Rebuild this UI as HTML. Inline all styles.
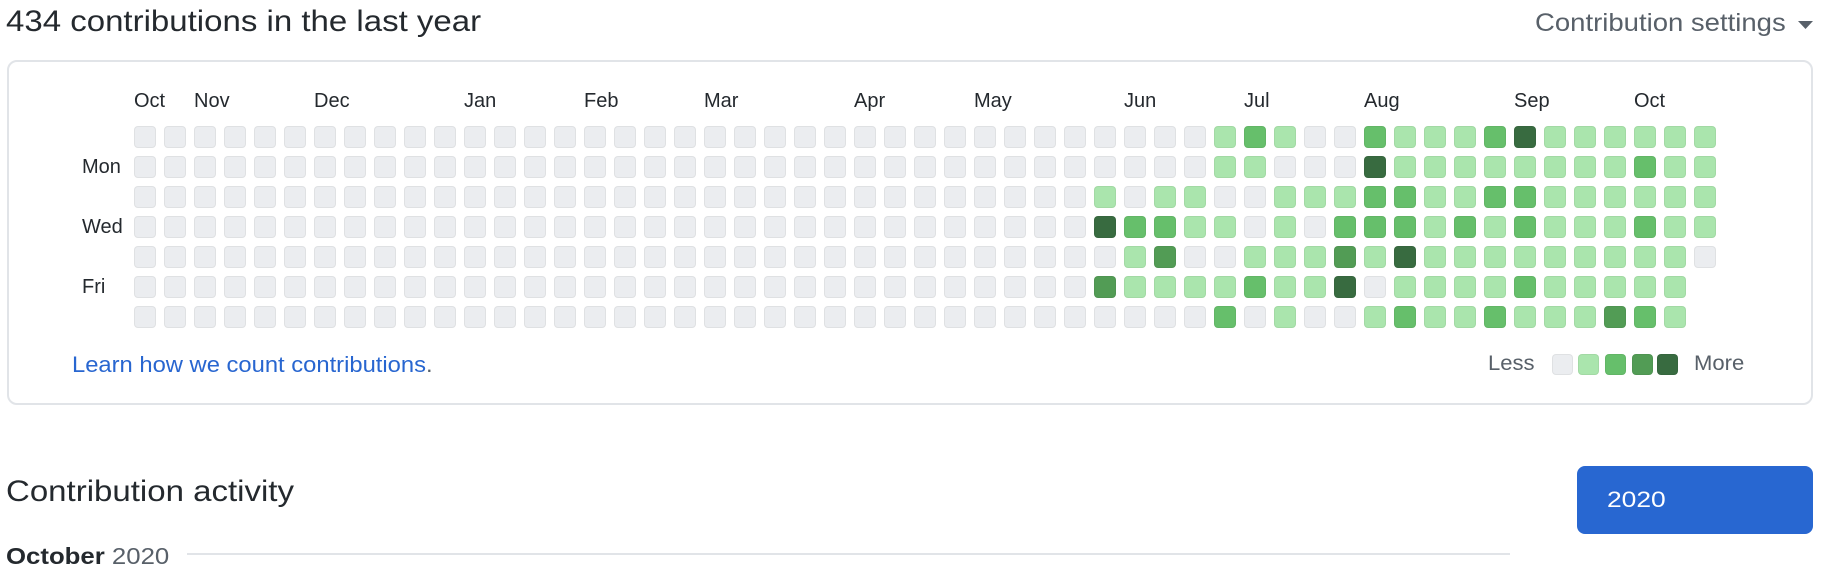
<!DOCTYPE html>
<html><head><meta charset="utf-8"><style>
body{margin:0;width:1832px;height:566px;overflow:hidden;background:#fff;font-family:"Liberation Sans",sans-serif;color:#24292e;position:relative}
.a{position:absolute;white-space:nowrap;transform-origin:0 50%}
.c{position:absolute;width:22px;height:22px;border-radius:4px;box-sizing:border-box;border:1px solid rgba(27,31,35,0.06)}
.m{font-size:20px;color:#24292e}
</style></head><body>
<div class="a" style="left:6px;top:5px;font-size:30px;transform:scaleX(1.1)">434 contributions in the last year</div>
<div class="a" style="left:1535px;top:9px;font-size:25px;color:#586069;transform:scaleX(1.1)">Contribution settings</div>
<svg class="a" style="left:1798px;top:20px" width="16" height="10"><path d="M0 1h15l-7.5 8z" fill="#586069"/></svg>
<div class="a" style="left:7px;top:60px;width:1806px;height:345px;box-sizing:border-box;border:2px solid #e1e4e8;border-radius:10px"></div>
<div id="g"></div>
<div class="a m" style="left:82px;top:156px">Mon</div>
<div class="a m" style="left:82px;top:216px">Wed</div>
<div class="a m" style="left:82px;top:276px">Fri</div>
<div class="a" style="left:72px;top:352px;font-size:22px;color:#2866d0;transform:scaleX(1.08)">Learn how we count contributions<span style="color:#586069">.</span></div>
<div class="a" style="left:1488px;top:352px;font-size:21px;color:#586069;transform:scaleX(1.05)">Less</div>
<div class="a" style="left:1694px;top:352px;font-size:21px;color:#586069;transform:scaleX(1.05)">More</div>
<div class="a" style="left:6px;top:475px;font-size:30px;transform:scaleX(1.1)">Contribution activity</div>
<div class="a" style="left:1577px;top:466px;width:236px;height:68px;background:#2867d1;border-radius:8px"></div>
<div class="a" style="left:1607px;top:487px;font-size:22px;color:#fff;transform:scaleX(1.2)">2020</div>
<div class="a" style="left:6px;top:543px;font-size:23px;font-weight:bold;transform:scaleX(1.12)">October <span style="color:#586069;font-weight:normal">2020</span></div>
<div class="a" style="left:187px;top:553px;width:1323px;height:2px;background:#e1e4e8"></div>
<script>
var col=["#ebedf0","#aae5ad","#66bf6b","#529c55","#386b40"];
var g=document.getElementById('g'),h='';
var months=[["Oct",0],["Nov",2],["Dec",6],["Jan",11],["Feb",15],["Mar",19],["Apr",24],["May",28],["Jun",33],["Jul",37],["Aug",41],["Sep",46],["Oct",50]];
months.forEach(function(m){h+='<div class="a m" style="left:'+(134+m[1]*30)+'px;top:90px">'+m[0]+'</div>';});
var A=[
"00001210021","00001100041","10110011122","42211010222","01300111314","31111211401","00002010012"];
var B=[
"211124111111","411111111211","221122111111","221212111211","141111111110","01111211111-","12112111321-"];
for(var c=0;c<53;c++)for(var r=0;r<7;r++){
 var v='0';
 if(c>=32&&c<=40)v=A[r][c-32];
 else if(c>=41)v=B[r][c-41];
 if(v=='-')continue;
 h+='<div class="c" style="left:'+(134+c*30)+'px;top:'+(126+r*30)+'px;background:'+col[+v]+'"></div>';
}
var lx=[1552,1578,1605,1632,1657];
lx.forEach(function(x,i){h+='<div class="c" style="width:21px;height:21px;left:'+x+'px;top:354px;background:'+col[i]+'"></div>';});
g.innerHTML=h;
</script>
</body></html>
